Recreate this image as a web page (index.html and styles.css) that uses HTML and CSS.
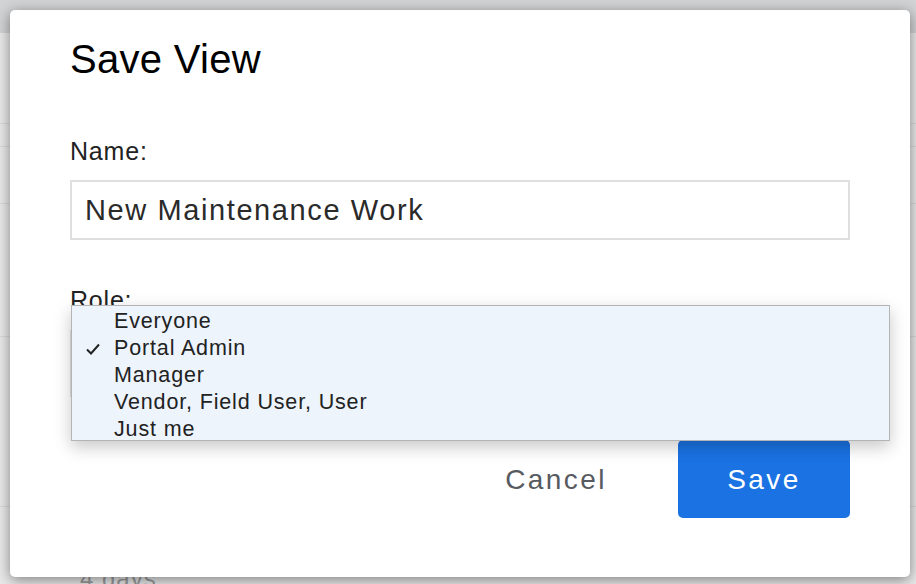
FILE: index.html
```html
<!DOCTYPE html>
<html>
<head>
<meta charset="utf-8">
<link rel="stylesheet" href="styles.css">
</head>
<body>
<div class="page">
  <div class="topbar"></div>
  <div class="row r1"></div>
  <div class="row r2"></div>
  <div class="row r3"></div>
  <div class="row r4"></div>
  <div class="row r5"></div>
  <div class="row r6"><span class="days">4 days</span></div>
</div>

<div class="modal">
  <h1 class="title">Save View</h1>
  <label class="label name-label">Name:</label>
  <div class="input">New Maintenance Work</div>
  <div class="role-field">
    <label class="label">Role:</label>
    <div class="select"></div>
    <ul class="menu">
      <li>Everyone</li>
      <li class="checked"><svg class="check" width="16" height="14" viewBox="0 0 16 14"><polyline points="2,7.5 6,11.5 14,2.5" fill="none" stroke="#222" stroke-width="2"/></svg>Portal Admin</li>
      <li>Manager</li>
      <li>Vendor, Field User, User</li>
      <li>Just me</li>
    </ul>
  </div>
  <div class="actions">
    <button class="btn cancel">Cancel</button>
    <button class="btn save">Save</button>
  </div>
</div>
</body>
</html>
```

FILE: styles.css
```css
html, body {
  margin: 0;
  padding: 0;
  width: 916px;
  height: 584px;
  overflow: hidden;
  background: #e9e9ea;
  font-family: "Liberation Sans", Arial, sans-serif;
}

.page {
  display: flex;
  flex-direction: column;
}

.topbar {
  height: 33px;
  background: #d2d3d5;
}

.row {
  border-bottom: 1px solid #dadadb;
}
.r1 { height: 90px; }
.r2 { height: 22px; }
.r3 { height: 56px; }
.r4 { height: 132px; }
.r5 { height: 169px; }
.r6 {
  height: 80px;
  border-bottom: none;
  padding: 58px 0 0 80px;
  box-sizing: border-box;
}
.days {
  font-size: 24px;
  color: #9c9c9d;
  letter-spacing: 1px;
}

.modal {
  position: absolute;
  left: 10px;
  top: 10px;
  width: 900px;
  height: 567px;
  box-sizing: border-box;
  background: #fff;
  border-radius: 5px;
  box-shadow: 0 3px 14px rgba(0, 0, 0, 0.45);
  padding: 26px 60px 0 60px;
  display: flex;
  flex-direction: column;
}

.title {
  margin: 0;
  font-weight: normal;
  font-size: 40px;
  line-height: 46px;
  letter-spacing: 0.3px;
  color: #000;
}

.label {
  display: block;
  font-size: 25px;
  line-height: 30px;
  letter-spacing: 0.8px;
  color: #222;
}

.name-label {
  margin-top: 54px;
}

.input {
  margin-top: 14px;
  height: 60px;
  box-sizing: border-box;
  border: 2px solid #dfdfdf;
  padding-left: 13px;
  font-size: 29px;
  line-height: 57px;
  letter-spacing: 1.6px;
  color: #2a2a2a;
}

.role-field {
  position: relative;
  margin-top: 45px;
}

.select {
  margin-top: 15px;
  height: 67px;
  box-sizing: border-box;
  border: 2px solid #dfdfdf;
}

.menu {
  position: absolute;
  left: 1px;
  top: 20px;
  width: 819px;
  height: 136px;
  overflow: hidden;
  box-sizing: border-box;
  margin: 0;
  padding: 2px 0 0 0;
  list-style: none;
  background: #edf4fc;
  border: 1px solid #b3b4b6;
  box-shadow: 0 6px 16px rgba(0, 0, 0, 0.22);
}

.menu li {
  position: relative;
  font-size: 21.5px;
  line-height: 27px;
  letter-spacing: 0.85px;
  color: #222;
  padding-left: 42px;
}

.check {
  position: absolute;
  left: 13px;
  top: 7px;
}

.actions {
  margin-top: 43px;
  display: flex;
  justify-content: flex-end;
  gap: 36px;
}

.btn {
  width: 172px;
  height: 78px;
  border: none;
  border-radius: 5px;
  font-family: "Liberation Sans", Arial, sans-serif;
  font-size: 28px;
  letter-spacing: 2.4px;
  padding: 2px 0 0 0;
}

.cancel {
  background: transparent;
  color: #575b61;
}

.save {
  background: #1a72e3;
  color: #fff;
}
```
